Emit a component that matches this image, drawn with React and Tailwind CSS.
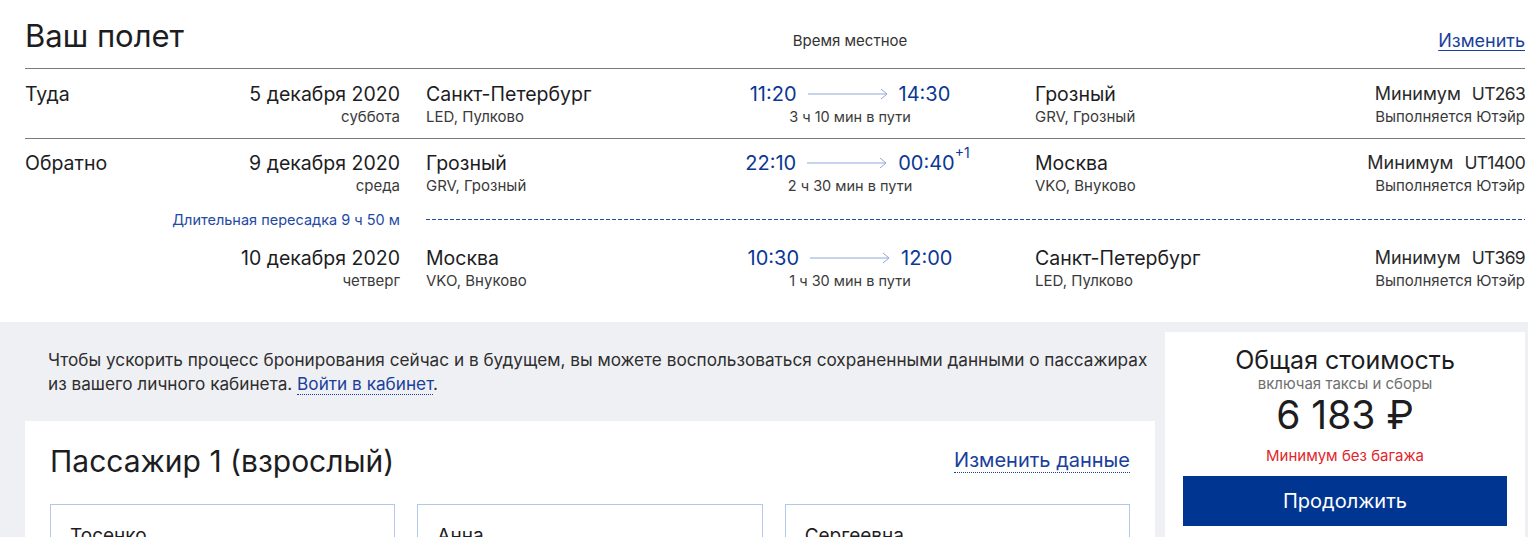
import React from "react";

const Arrow = () => (
  <svg width="80" height="12" viewBox="0 0 80 12" className="shrink-0">
    <line x1="0" y1="6" x2="79" y2="6" stroke="#8ea8d6" strokeWidth="1" />
    <polyline points="73,1 79,6 73,11" fill="none" stroke="#8ea8d6" strokeWidth="1" />
  </svg>
);

const GRID = "grid grid-cols-[200px_175px_330px_240px_1fr_auto]";

const FlightRow = ({ label, date, day, from, fromCode, dep, arr, plus, dur, to, toCode, flight }) => (
  <div className={GRID}>
    <div className="text-[19.5px] leading-[26px] text-[#1d1d1f]">{label}</div>
    <div className="text-right">
      <div className="text-[19.5px] leading-[26px] text-[#1d1d1f]">{date}</div>
      <div className="text-[15px] leading-[20px] text-[#3a3a3a]">{day}</div>
    </div>
    <div className="pl-[26px]">
      <div className="text-[19.5px] leading-[26px] text-[#1d1d1f]">{from}</div>
      <div className="text-[15px] leading-[20px] text-[#3a3a3a]">{fromCode}</div>
    </div>
    <div className="flex flex-col items-center">
      <div className="flex items-center gap-[11px] h-[26px] text-[20px] text-[#0b3894]">
        <span>{dep}</span>
        <Arrow />
        <span className="relative">
          {arr}
          {plus && <span className="absolute left-full top-[-2px] text-[14px] leading-none">{plus}</span>}
        </span>
      </div>
      <div className="text-[14.5px] leading-[20px] text-[#3a3a3a]">{dur}</div>
    </div>
    <div className="pl-[65px]">
      <div className="text-[19.5px] leading-[26px] text-[#1d1d1f]">{to}</div>
      <div className="text-[15px] leading-[20px] text-[#3a3a3a]">{toCode}</div>
    </div>
    <div className="text-right">
      <div className="flex justify-end items-baseline gap-[11px] text-[18px] leading-[26px] text-[#2a2a2a]">
        <span>Минимум</span>
        <span className="text-[17.5px] tracking-[-0.04em]">{flight}</span>
      </div>
      <div className="text-[15px] leading-[20px] text-[#3a3a3a]">Выполняется Ютэйр</div>
    </div>
  </div>
);

const Field = ({ value }) => (
  <div className="h-[60px] border border-[#b3c7ea] px-[19px] pt-[17px] text-[19px] text-[#1d1d1f]">{value}</div>
);

export default function App() {
  return (
    <div className="w-[1528px] h-[537px] overflow-hidden bg-white font-['Inter',sans-serif]">
      {/* flight summary */}
      <div className="pl-[25px] pr-[3px]">
        <div className={`${GRID} h-[69px] border-b border-[#7b7b7b]`}>
          <div className="col-span-3 pt-[16px] text-[31px] leading-[40px] text-[#1d1d1f]">Ваш полет</div>
          <div className="pt-[31px] text-center text-[15px] leading-[20px] text-[#333]">Время местное</div>
          <div />
          <div className="pt-[29px] text-right">
            <span className="text-[18px] leading-[24px] text-[#1a3f9c] underline underline-offset-[3px]">Изменить</span>
          </div>
        </div>

        <div className="h-[70px] pt-[12px] border-b border-[#7b7b7b]">
          <FlightRow
            label="Туда"
            date="5 декабря 2020"
            day="суббота"
            from="Санкт-Петербург"
            fromCode="LED, Пулково"
            dep="11:20"
            arr="14:30"
            dur="3 ч 10 мин в пути"
            to="Грозный"
            toCode="GRV, Грозный"
            flight="UT263"
          />
        </div>

        <div className="pt-[11px] h-[183px]">
          <FlightRow
            label="Обратно"
            date="9 декабря 2020"
            day="среда"
            from="Грозный"
            fromCode="GRV, Грозный"
            dep="22:10"
            arr="00:40"
            plus="+1"
            dur="2 ч 30 мин в пути"
            to="Москва"
            toCode="VKO, Внуково"
            flight="UT1400"
          />
          <div className="grid grid-cols-[375px_1fr] items-center h-[20px] mt-[13px]">
            <div className="text-right text-[14.5px] text-[#1f4aa6]">Длительная пересадка 9 ч 50 м</div>
            <div className="ml-[26px] h-px bg-[repeating-linear-gradient(90deg,#1f4aa6_0_4px,transparent_4px_6px)]" />
          </div>
          <div className="mt-[16px]">
            <FlightRow
              label=""
              date="10 декабря 2020"
              day="четверг"
              from="Москва"
              fromCode="VKO, Внуково"
              dep="10:30"
              arr="12:00"
              dur="1 ч 30 мин в пути"
              to="Санкт-Петербург"
              toCode="LED, Пулково"
              flight="UT369"
            />
          </div>
        </div>
      </div>

      {/* booking area */}
      <div className="bg-[#eff0f4] flex gap-[10px] pl-[25px] pr-[3px] h-[215px]">
        <div className="w-[1130px] shrink-0">
          <p className="pl-[23px] pt-[26px] text-[17.2px] leading-[24px] text-[#2e2e2e]">
            Чтобы ускорить процесс бронирования сейчас и в будущем, вы можете воспользоваться сохраненными данными о пассажирах
            <br />
            из вашего личного кабинета.{" "}
            <span className="text-[#1a3f9c] border-b border-dotted border-[#1a3f9c]">Войти в кабинет</span>.
          </p>
          <div className="mt-[25px] bg-white px-[25px] pt-[20px] h-[200px]">
            <div className="flex justify-between items-start">
              <div className="text-[30px] leading-[40px] text-[#1d1d1f]">Пассажир 1 (взрослый)</div>
              <div className="pt-[6px]">
                <span className="text-[20px] leading-[26px] text-[#1a3f9c] border-b border-dotted border-[#1a3f9c]">Изменить данные</span>
              </div>
            </div>
            <div className="grid grid-cols-3 gap-[22px] mt-[23px]">
              <Field value="Тосенко" />
              <Field value="Анна" />
              <Field value="Сергеевна" />
            </div>
          </div>
        </div>

        <div className="flex-1 mt-[10px] bg-white px-[18px] pt-[13px] text-center">
          <div className="text-[25px] leading-[30px] text-[#1d1d1f]">Общая стоимость</div>
          <div className="text-[15px] leading-[18px] text-[#6f6f6f]">включая таксы и сборы</div>
          <div className="text-[39px] leading-[44px] text-[#1d1d1f]">6 183 ₽</div>
          <div className="mt-[10px] text-[15px] leading-[18px] text-[#e1262b]">Минимум без багажа</div>
          <div className="mt-[11px] h-[50px] bg-[#003592] flex items-center justify-center text-[20px] text-white">
            Продолжить
          </div>
        </div>
      </div>
    </div>
  );
}
